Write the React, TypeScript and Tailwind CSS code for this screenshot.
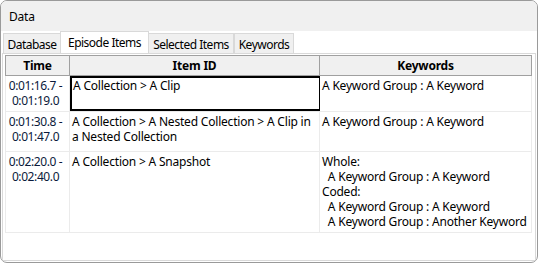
const rows = [
  {
    time: ['0:01:16.7 -', '0:01:19.0'],
    item: 'A Collection > A Clip',
    keywords: ['A Keyword Group : A Keyword'],
    h: 'h-[36px]',
    selected: true,
  },
  {
    time: ['0:01:30.8 -', '0:01:47.0'],
    item: 'A Collection > A Nested Collection > A Clip in a Nested Collection',
    keywords: ['A Keyword Group : A Keyword'],
    h: 'h-[40px]',
    selected: false,
  },
  {
    time: ['0:02:20.0 -', '0:02:40.0'],
    item: 'A Collection > A Snapshot',
    keywords: [
      'Whole:',
      '  A Keyword Group : A Keyword',
      'Coded:',
      '  A Keyword Group : A Keyword',
      '  A Keyword Group : Another Keyword',
    ],
    h: 'h-[81px]',
    selected: false,
  },
]

const tabs = [
  { label: 'Database', w: 'w-[58px]' },
  { label: 'Episode Items', w: 'w-[89px]' },
  { label: 'Selected Items', w: 'w-[86px]' },
  { label: 'Keywords', w: 'w-[60px]' },
]

export default function App() {
  return (
    <div
      className="w-[539px] h-[265px] bg-white text-[12px] leading-[15px] text-black tracking-[-0.2px]"
      style={{ fontFamily: '"Noto Sans", "Open Sans", sans-serif' }}
    >
      <div className="w-[538px] h-[263px] rounded-[7px] border border-[#9a9a9a] overflow-hidden flex flex-col bg-white">
        {/* title bar */}
        <div className="h-[30px] bg-[#f0f0f0] flex items-center pl-[8px] shrink-0">Data</div>

        {/* tabs */}
        <div className="h-[22px] flex items-end pl-[2px] shrink-0 tracking-[-0.5px]">
          {tabs.map((t) =>
            t.label === 'Episode Items' ? (
              <div
                key={t.label}
                className={`${t.w} h-[22px] bg-white border border-b-0 border-[#d9d9d9] flex items-center justify-center -mx-[1px] relative z-10`}
              >
                {t.label}
              </div>
            ) : (
              <div
                key={t.label}
                className={`${t.w} h-[20px] bg-[#f0f0f0] border border-b-0 border-[#d9d9d9] flex items-center justify-center pt-[1px]`}
              >
                {t.label}
              </div>
            )
          )}
        </div>

        {/* page */}
        <div className="flex-1 border border-[#d9d9d9] mx-[1px] mb-[1px] pt-[1px] pl-[2px] pr-[3px]">
          <div className="w-[527px]">
            {/* header */}
            <div className="flex h-[21px] bg-[#f0f0f0] border border-[#a0a0a0] font-bold">
              <div className="w-[64px] border-r border-[#a0a0a0] flex items-center justify-center">Time</div>
              <div className="w-[250px] border-r border-[#a0a0a0] flex items-center justify-center">Item ID</div>
              <div className="flex-1 flex items-center justify-center">Keywords</div>
            </div>

            {rows.map((r, i) => (
              <div key={i} className={`flex ${r.h} border-b border-x border-[#ebebeb]`}>
                <div className="w-[64px] border-r border-[#ebebeb] pt-[2px] pr-[4px] text-center text-[#0b1a3b] tracking-[-0.4px]">
                  {r.time.map((t) => (
                    <div key={t}>{t}</div>
                  ))}
                </div>
                <div
                  className={`w-[250px] border-r border-[#ebebeb] ${
                    r.selected ? 'border-2 !border-black pl-[1px]' : 'pl-[2px] pt-[2px]'
                  }`}
                >
                  {r.item}
                </div>
                <div className="flex-1 pl-[2px] pt-[2px]">
                  {r.keywords.map((k, j) => (
                    <div key={j} className="whitespace-pre">
                      {k}
                    </div>
                  ))}
                </div>
              </div>
            ))}
          </div>
        </div>
      </div>
    </div>
  )
}
